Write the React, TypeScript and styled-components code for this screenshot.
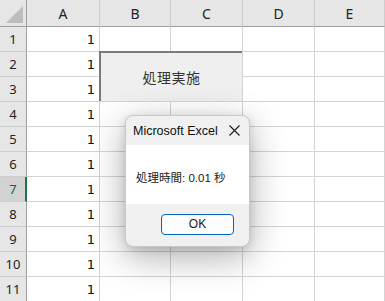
import { Fragment } from "react";
import styled, { createGlobalStyle } from "styled-components";

const GlobalStyle = createGlobalStyle`
    html, body{
        margin: 0;
        padding: 0;
        background: #ffffff;
        overflow: hidden;
    }
    body{
        font-family: "Noto Sans", "Noto Sans CJK JP", sans-serif;
    }
`;

const Page = styled.div`
    position: relative;
    width: 385px;
    height: 301px;
    overflow: hidden;
`;

const Sheet = styled.div`
    display: grid;
    grid-template-columns: 27px 73px 71px 72px 72px 1fr;
    grid-template-rows: 27px repeat(11, 25px);
    width: 385px;
`;

const Corner = styled.div`
    background: #e6e6e6;
    border-right: 1px solid #9f9f9f;
    border-bottom: 1px solid #9f9f9f;
    box-sizing: border-box;
    position: relative;
    &::after{
        content: "";
        position: absolute;
        left: 6px;
        top: 6px;
        width: 17px;
        height: 17px;
        background: #bdbdbd;
        clip-path: polygon(100% 0, 100% 100%, 0 100%);
    }
`;

const ColHead = styled.div`
    background: #e6e6e6;
    border-right: 1px solid #cdcdcd;
    border-bottom: 1px solid #9f9f9f;
    box-sizing: border-box;
    display: flex;
    align-items: center;
    justify-content: center;
    font-family: "Noto Sans", sans-serif;
    font-size: 14px;
    color: #222;
    padding-top: 1px;
`;

const RowHead = styled.div<{ $active?: boolean }>`
    background: ${p => (p.$active ? "#d2d2d2" : "#e6e6e6")};
    border-right: ${p => (p.$active ? "2px solid #217346" : "1px solid #9f9f9f")};
    border-bottom: 1px solid #cdcdcd;
    box-sizing: border-box;
    display: flex;
    align-items: center;
    justify-content: center;
    font-family: "Noto Sans", sans-serif;
    font-size: 13px;
    color: ${p => (p.$active ? "#1e5c3a" : "#222")};
    padding-left: ${p => (p.$active ? "1px" : "0")};
`;

const Cell = styled.div`
    border-right: 1px solid #d4d4d4;
    border-bottom: 1px solid #d4d4d4;
    box-sizing: border-box;
    display: flex;
    align-items: center;
    justify-content: flex-end;
    padding: 1px 4px 0 0;
    font-family: "DejaVu Sans", sans-serif;
    font-size: 13px;
    color: #111;
`;

const SheetButton = styled.button`
    position: absolute;
    left: 99px;
    top: 51px;
    width: 143px;
    height: 50px;
    box-sizing: border-box;
    margin: 0;
    padding: 0;
    background: #efefef;
    border: none;
    border-top: 2px solid #7a7a7a;
    border-left: 2px solid #7a7a7a;
    font-family: "Noto Sans CJK JP", sans-serif;
    font-size: 14px;
    color: #333;
    letter-spacing: 0.5px;
`;

const Dialog = styled.div`
    position: absolute;
    left: 125px;
    top: 115px;
    width: 125px;
    height: 132px;
    display: flex;
    flex-direction: column;
    border-radius: 8px;
    overflow: hidden;
    background: #f0f0f0;
    border: 1px solid #c8c8c8;
    box-sizing: border-box;
    box-shadow: 0 10px 36px rgba(0, 0, 0, 0.32), 0 2px 8px rgba(0, 0, 0, 0.12);
`;

const TitleBar = styled.div`
    height: 29px;
    display: flex;
    align-items: center;
    justify-content: space-between;
    padding: 0 9px 0 7px;
    font-family: "Liberation Sans", "Noto Sans", sans-serif;
    font-size: 12.5px;
    color: #111;
`;

const Body = styled.div`
    height: 59px;
    background: #ffffff;
    display: flex;
    align-items: center;
    padding: 4px 0 0 10px;
    box-sizing: border-box;
    font-family: "Liberation Sans", "Noto Sans CJK JP", sans-serif;
    font-size: 11.5px;
    color: #1a1a1a;
`;

const Footer = styled.div`
    flex: 1;
    display: flex;
    align-items: center;
    justify-content: flex-end;
    padding: 0 15px 2px 0;
`;

const OkButton = styled.button`
    width: 73px;
    height: 21px;
    box-sizing: border-box;
    background: #fdfdfd;
    border: 1.5px solid #0067c0;
    border-radius: 4px;
    font-family: "Liberation Sans", sans-serif;
    font-size: 12px;
    color: #1a1a1a;
    padding: 0;
`;

const columns = ["A", "B", "C", "D", "E"];
const rows = Array.from({ length: 11 }, (_, i) => i + 1);

const App = () => {
    return (
        <Page>
            <GlobalStyle />
            <Sheet>
                <Corner />
                {columns.map(c => <ColHead key={c}>{c}</ColHead>)}
                {rows.map(r => (
                    <Fragment key={r}>
                        <RowHead $active={r === 7}>{r}</RowHead>
                        <Cell>1</Cell>
                        <Cell />
                        <Cell />
                        <Cell />
                        <Cell />
                    </Fragment>
                ))}
            </Sheet>
            <SheetButton>処理実施</SheetButton>
            <Dialog>
                <TitleBar>
                    <span>Microsoft Excel</span>
                    <svg width="11" height="11" viewBox="0 0 11 11">
                        <path d="M0.5 0.5 L10.5 10.5 M10.5 0.5 L0.5 10.5" stroke="#1a1a1a" strokeWidth="1.1" />
                    </svg>
                </TitleBar>
                <Body>処理時間: 0.01 秒</Body>
                <Footer>
                    <OkButton>OK</OkButton>
                </Footer>
            </Dialog>
        </Page>
    );
};

export default App;
